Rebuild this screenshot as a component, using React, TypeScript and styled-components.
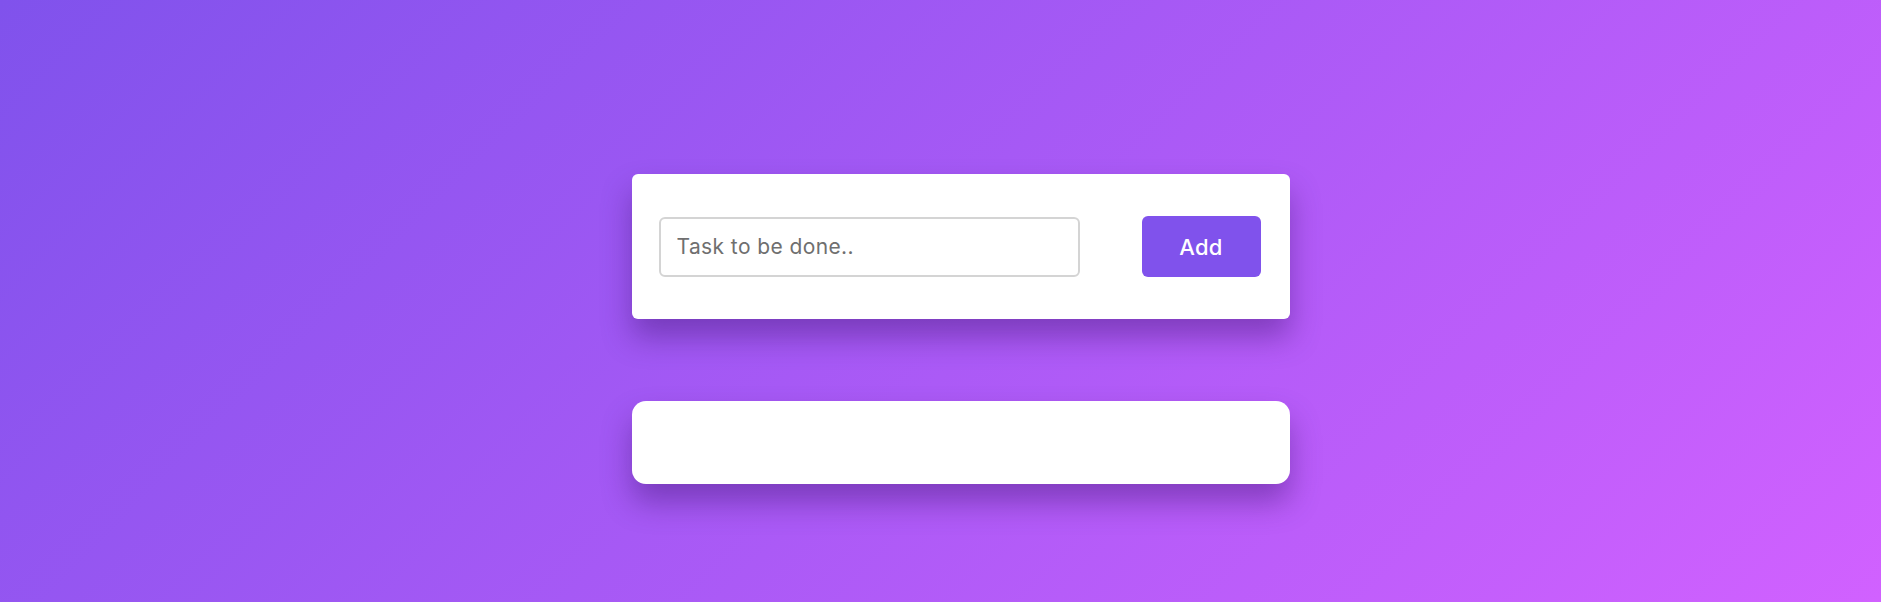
import { styled, createGlobalStyle } from "styled-components";

const GlobalStyle = createGlobalStyle`
  * {
    box-sizing: border-box;
  }
  html, body {
    margin: 0;
    padding: 0;
  }
  body {
    min-height: 100vh;
    font-family: "Inter", "Noto Sans", sans-serif;
    background: linear-gradient(135deg, #8052ec, #d161ff);
    background-attachment: fixed;
  }
`;

const Page = styled.main`
  min-height: 100vh;
  display: flex;
  flex-direction: column;
  align-items: center;
  gap: 82px;
  padding: 174px 0 0 40px;
`;

const Card = styled.div<{ $radius: number }>`
  width: 658px;
  background: #fff;
  border-radius: ${(p) => p.$radius}px;
  box-shadow: 0 18px 30px rgba(60, 20, 110, 0.42);
`;

const Form = styled.form`
  display: flex;
  align-items: center;
  justify-content: space-between;
  padding: 42px 29px 42px 27px;
`;

const Input = styled.input`
  width: 421px;
  height: 60px;
  padding: 0 16px;
  border: 2px solid #d4d4d4;
  border-radius: 6px;
  font-family: inherit;
  font-size: 21px;
  letter-spacing: 0.4px;
  color: #333;
  outline: none;
  &::placeholder {
    color: #6f6f6f;
  }
`;

const AddButton = styled.button`
  width: 119px;
  height: 61px;
  border: none;
  border-radius: 6px;
  background: #8052ec;
  color: #fff;
  font-family: inherit;
  font-size: 22px;
  font-weight: 500;
  letter-spacing: 0.3px;
  cursor: pointer;
`;

const TaskList = styled(Card)`
  height: 83px;
`;

const App = () => {
  return (
    <>
      <GlobalStyle />
      <Page>
        <Card $radius={6}>
          <Form onSubmit={(e) => e.preventDefault()}>
            <Input placeholder="Task to be done.." />
            <AddButton>Add</AddButton>
          </Form>
        </Card>
        <TaskList $radius={14} />
      </Page>
    </>
  );
};

export default App;
